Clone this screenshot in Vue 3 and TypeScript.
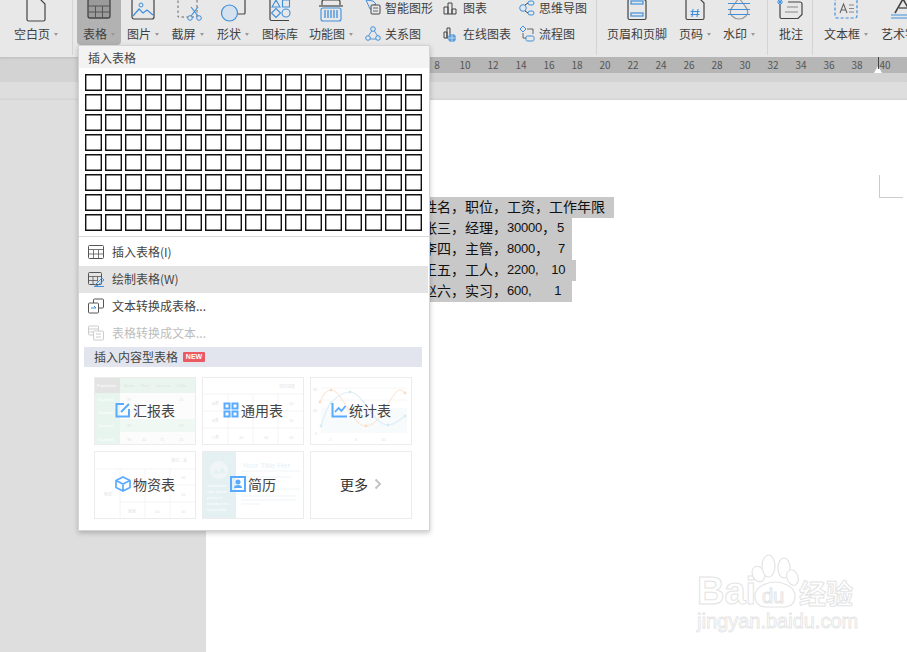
<script setup lang="ts">
const rows = Array.from({ length: 8 * 17 }, (_, i) => i)
const ruler = Array.from({ length: 17 }, (_, i) => 8 + i * 2)
const lines = [
  { text: '姓名，职位，工资，工作年限', cls: 'w1' },
  { text: '张三，经理，', num: '30000', tail: '，', end: '5', cls: 'w2' },
  { text: '李四，主管，', num: '8000', tail: '，', end: '7', cls: 'w3' },
  { text: '王五，工人，', num: '2200,', tail: '', end: '10', cls: 'w4' },
  { text: '赵六，实习，', num: '600,', tail: '', end: '1', cls: 'w5' },
]
</script>

<template>
  <div class="app">
    <header class="toolbar">
      <div class="tool t-blank">
        <svg class="ic" viewBox="0 0 30 24"><path d="M6 1h13l5 5v15.500a1.500 1.500 0 0 1-1.500 1.500h-15A1.500 1.500 0 0 1 6 21.500z" fill="none" stroke="#444" stroke-width="1.200"/></svg>
        <div class="lbl">空白页<i class="caret"></i></div>
      </div>
      <span class="sep s1"></span>
      <div class="tool t-table active">
        <svg class="ic" viewBox="0 0 30 24"><rect x="4" y="1" width="22" height="19" rx="2" fill="#9b9b9b" stroke="#444" stroke-width="1.300"/><path d="M4 8h22M4 14h22M11.500 8v12M18.500 8v12" stroke="#555" fill="none"/></svg>
        <div class="lbl">表格<i class="caret"></i></div>
      </div>
      <div class="tool t-44">
        <svg class="ic" viewBox="0 0 30 24"><rect x="4" y="1" width="22" height="20" rx="2" fill="none" stroke="#444" stroke-width="1.200"/><circle cx="13" cy="7" r="2" fill="none" stroke="#3f8fdc"/><path d="M5 18l6-7 4 4 4-3 6 5" fill="none" stroke="#3f8fdc" stroke-width="1.200"/></svg>
        <div class="lbl">图片<i class="caret"></i></div>
      </div>
      <div class="tool t-45">
        <svg class="ic" viewBox="0 0 30 24"><rect x="5" y="1" width="19" height="18" fill="none" stroke="#666" stroke-dasharray="2.500 2.500"/><path d="M18 18l7-9M25 18l-7-9" stroke="#3f8fdc" stroke-width="1.200"/><circle cx="17" cy="20" r="2.300" fill="#e8e8e8" stroke="#3f8fdc"/><circle cx="26" cy="20" r="2.300" fill="#e8e8e8" stroke="#3f8fdc"/></svg>
        <div class="lbl">截屏<i class="caret"></i></div>
      </div>
      <div class="tool t-46">
        <svg class="ic" viewBox="0 0 30 24"><path d="M15 1h11a1 1 0 0 1 1 1v13a1 1 0 0 1-1 1h-6" fill="none" stroke="#444" stroke-width="1.200"/><circle cx="11.500" cy="15" r="8" fill="#d5e1ee" stroke="#3f8fdc" stroke-width="1.200"/></svg>
        <div class="lbl">形状<i class="caret"></i></div>
      </div>
      <div class="tool t-48">
        <svg class="ic" viewBox="0 0 30 24"><path d="M5 1v20a1.500 1.500 0 0 0 1.500 1.500H24" fill="none" stroke="#444" stroke-width="1.200"/><path d="M7 9l4-7 4 7zM17.500 2h7v7h-7zM11 10.500l4.500 4.500-4.500 4.500-4.500-4.500z" fill="none" stroke="#3f8fdc" stroke-width="1.100"/><circle cx="21" cy="15" r="4" fill="none" stroke="#3f8fdc" stroke-width="1.100"/></svg>
        <div class="lbl">图标库</div>
      </div>
      <div class="tool t-54">
        <svg class="ic" viewBox="0 0 30 24"><path d="M6 7V4q0-2 2-2h14q2 0 2 2v3" fill="none" stroke="#444" stroke-width="1.200"/><path d="M3 8h24" stroke="#444" stroke-width="1.200"/><rect x="5" y="10" width="20" height="13" rx="2" fill="none" stroke="#3f8fdc" stroke-width="1.100"/><path d="M9 12v8M12 12v8M15 12v8M18 12v8M21 12v8" stroke="#3f8fdc" stroke-width="1.300"/></svg>
        <div class="lbl">功能图<i class="caret"></i></div>
      </div>
      <div class="mini m1">
        <div class="mini-row">
          <svg class="mi" viewBox="0 0 16 16"><path d="M1 0l7 1 3 3-4 2 2 3-4 0z" fill="none" stroke="#3f8fdc"/><rect x="6" y="5" width="9" height="9" rx="1" fill="#e8e8e8" stroke="#444"/><path d="M8 8h5M8 11h5" stroke="#444" stroke-width=".8"/></svg>智能图形
        </div>
        <div class="mini-row">
          <svg class="mi" viewBox="0 0 16 16"><path d="M8 3 2 12M8 3l6 9M4 13h8" fill="none" stroke="#3f8fdc" stroke-width=".9"/><circle cx="8" cy="3" r="2.300" fill="#e8e8e8" stroke="#3f8fdc"/><circle cx="3" cy="12" r="2.300" fill="#e8e8e8" stroke="#3f8fdc"/><circle cx="13" cy="12" r="2.300" fill="#e8e8e8" stroke="#3f8fdc"/></svg>关系图
        </div>
      </div>
      <div class="mini m2">
        <div class="mini-row">
          <svg class="mi" viewBox="0 0 16 16"><path d="M1 7h4v7H1zM5 3h4v11H5zM9 9h4v5H9z" fill="none" stroke="#444"/></svg>图表
        </div>
        <div class="mini-row">
          <svg class="mi" viewBox="0 0 16 16"><path d="M1 6h3v6H1zM4 2h3v10H4z" fill="none" stroke="#444"/><circle cx="9" cy="12" r="4" fill="#5a9ee0"/><path d="M5 12h8M9 8v8" stroke="#e8e8e8" stroke-width=".7"/></svg>在线图表
        </div>
      </div>
      <div class="mini m3">
        <div class="mini-row">
          <svg class="mi" viewBox="0 0 16 16"><circle cx="4" cy="8" r="3.300" fill="none" stroke="#3f8fdc"/><rect x="9" y="1" width="6" height="4" rx="2" fill="none" stroke="#3f8fdc"/><rect x="9" y="11" width="6" height="4" rx="2" fill="none" stroke="#3f8fdc"/><path d="M6 5l3-2M6 11l3 2" stroke="#444" fill="none"/></svg>思维导图
        </div>
        <div class="mini-row">
          <svg class="mi" viewBox="0 0 16 16"><path d="M4 0l3 3-3 3-3-3z" fill="none" stroke="#3f8fdc"/><rect x="7" y="10" width="8" height="5" rx="1.500" fill="none" stroke="#3f8fdc"/><path d="M8 3h6v5M4 7v5h3" fill="none" stroke="#444" stroke-width=".8"/></svg>流程图
        </div>
      </div>
      <span class="sep s2"></span>
      <div class="tool t-60">
        <svg class="ic" viewBox="0 0 30 24"><path d="M6 3a2 2 0 0 1 2-2h14l2 2v17a1.500 1.500 0 0 1-1.500 1.500h-15A1.500 1.500 0 0 1 6 20z" fill="none" stroke="#444" stroke-width="1.200"/><rect x="9" y="3" width="12" height="3" fill="none" stroke="#3f8fdc" stroke-width="1.200"/><rect x="9" y="15" width="12" height="3" fill="none" stroke="#3f8fdc" stroke-width="1.200"/></svg>
        <div class="lbl">页眉和页脚</div>
      </div>
      <div class="tool t-page">
        <svg class="ic" viewBox="0 0 30 24"><path d="M6 1h14l4 4v15a1.500 1.500 0 0 1-1.500 1.500h-15A1.500 1.500 0 0 1 6 20z" fill="none" stroke="#444" stroke-width="1.200"/><path d="M13 11l-1 8M18 11l-1 8M10.500 13.500h9M10.500 16.500h9" stroke="#3f8fdc" stroke-width="1.100"/></svg>
        <div class="lbl">页码<i class="caret"></i></div>
      </div>
      <div class="tool t-water">
        <svg class="ic" viewBox="0 0 30 24"><path d="M15 0l6 8q5 6 1 10-3 3-7 3t-7-3q-4-4 1-10z" fill="none" stroke="#999" stroke-width="1.200"/><path d="M4 5.500h22M4 11.500h22M4 16.500h22" stroke="#3f8fdc" stroke-width="1.100"/></svg>
        <div class="lbl">水印<i class="caret"></i></div>
      </div>
      <span class="sep s3"></span>
      <div class="tool t-note">
        <svg class="ic" viewBox="0 0 30 24"><path d="M4 6v13a1.500 1.500 0 0 0 1.500 1.500H22l4-4V6a2 2 0 0 0-2-2H12" fill="none" stroke="#444" stroke-width="1.200"/><path d="M4 1v6M1 4h6M2 2l4 4M6 2l-4 4" stroke="#3f8fdc"/><path d="M11 9h11M9 14h13" stroke="#888"/></svg>
        <div class="lbl">批注</div>
      </div>
      <span class="sep s4"></span>
      <div class="tool t-frame">
        <svg class="ic" viewBox="0 0 30 24"><rect x="4" y="1" width="22" height="19" rx="2" fill="none" stroke="#3f8fdc" stroke-width="1.200" stroke-dasharray="3 2"/><path d="M9 15l3.500-9 3.500 9M10.300 12h4.500" fill="none" stroke="#666" stroke-width="1.100"/><path d="M18 7h5M18 10.500h5M18 14h5" stroke="#888"/></svg>
        <div class="lbl">文本框<i class="caret"></i></div>
      </div>
      <div class="tool t-art">
        <svg class="ic" viewBox="0 0 30 24"><path d="M7 15 15 1l8 14" fill="none" stroke="#444" stroke-width="1.600"/><path d="M11 10h8" stroke="#444" stroke-width="1.300"/><path d="M3 17h24M3 20h24" stroke="#3f8fdc" stroke-width="1.100"/></svg>
        <div class="lbl">艺术字<i class="caret"></i></div>
      </div>
    </header>

    <div class="ruler-zone">
      <div class="ruler">
        <span v-for="n in ruler" :key="n" class="tick">{{ n }}</span>
        <i class="marker"></i>
      </div>
    </div>
    <div class="gutter"></div>

    <main class="workspace">
      <section class="page">
        <div v-for="l in lines" :key="l.text" class="doc-line" :class="l.cls">
          <span>{{ l.text }}</span><span v-if="l.num" class="num">{{ l.num }}</span><span>{{ l.tail }}</span><span v-if="l.end" class="num end">{{ l.end }}</span>
        </div>
        <i class="crop"></i>
        <div class="watermark">
          <div class="wm-top">
            <span class="wm-bai">Bai</span>
            <span class="wm-paw">
              <svg viewBox="0 0 48 54" width="48" height="54"><g fill="#fff" stroke="#e4e4e4" stroke-width="1.200"><ellipse cx="7.500" cy="20" rx="6" ry="8" transform="rotate(-25 7.500 20)"/><ellipse cx="17.500" cy="12" rx="6.500" ry="11"/><ellipse cx="33" cy="14" rx="6" ry="10"/><ellipse cx="41.500" cy="23.500" rx="5.500" ry="8" transform="rotate(-20 41.500 23.500)"/><path d="M4 42q0-7 8-11 6-3 12-3t12 3q8 4 8 11 0 11-12 11H16Q4 53 4 42z"/></g></svg>
              <b class="wm-du">du</b>
            </span>
            <span class="wm-cn">经验</span>
          </div>
          <div class="wm-url">jingyan.baidu.com</div>
        </div>
      </section>
    </main>

    <aside class="menu">
      <div class="menu-head">插入表格</div>
      <div class="grid"><i v-for="c in rows" :key="c" class="cell"></i></div>
      <div class="menu-list">
        <div class="item">
          <svg class="mi-ic" viewBox="0 0 18 16"><rect x="1.500" y="1.500" width="15" height="13" rx="1" fill="none" stroke="#555"/><path d="M1.500 5.500h15M1.500 10h15M6.500 5.500v9M11.500 5.500v9" stroke="#555" stroke-width=".8"/></svg>插入表格(I)
        </div>
        <div class="item hover">
          <svg class="mi-ic" viewBox="0 0 18 16"><rect x="1.500" y="1.500" width="13" height="12" rx="1" fill="none" stroke="#555"/><path d="M1.500 5.500h13M1.500 9.500h9M6 5.500v8M10.500 5.500v5" stroke="#555" stroke-width=".8"/><path d="M8 14l7-7 2 2-7 6zM7 15.500h10" fill="none" stroke="#3f8fdc"/></svg>绘制表格(W)
        </div>
        <div class="item">
          <svg class="mi-ic" viewBox="0 0 18 16"><rect x="6.500" y="1" width="10" height="9" rx="1" fill="#fff" stroke="#555"/><rect x="1.500" y="5" width="10" height="10" rx="1" fill="#fff" stroke="#555"/><path d="M4 10h5l-2-2" fill="none" stroke="#3f8fdc"/></svg>文本转换成表格...
        </div>
        <div class="item disabled">
          <svg class="mi-ic" viewBox="0 0 18 16"><rect x="1.500" y="1" width="10" height="9" rx="1" fill="none" stroke="#ccc"/><path d="M1.500 4h10M1.500 7h10" stroke="#ccc"/><rect x="6.500" y="6" width="10" height="9" rx="1" fill="#fff" stroke="#ccc"/><path d="M9 9h5M9 12h5" stroke="#ccc"/></svg>表格转换成文本...
        </div>
      </div>
      <div class="section">插入内容型表格<span class="new">NEW</span></div>
      <div class="cards">
        <div class="card">
          <svg class="thumb" viewBox="0 0 100 66">
            <rect width="100" height="66" fill="#fcfcfc"/><rect x="0" y="0" width="25" height="66" fill="#e8f5ef"/><rect x="25" width="75" height="15" fill="#eaf5f0"/><rect width="25" height="15" fill="#e4e4e4"/><rect x="25" y="41" width="75" height="13" fill="#f0f8f4"/>
            <g class="tt" fill="#fff"><text x="2" y="9">Population</text><text x="3" y="23">Sample1</text><text x="3" y="36">Sample2</text><text x="3" y="49">Sample3</text><text x="3" y="63">Sample4</text></g>
            <g class="tt" fill="#dfe6e3"><text x="29" y="9">Alpha</text><text x="46" y="9">Beta</text><text x="61" y="9">Gamma</text><text x="82" y="9">Delta</text><text x="32" y="23">35</text><text x="84" y="23">25</text><text x="32" y="49">35</text><text x="84" y="49">25</text><text x="32" y="63">35</text><text x="47" y="63">42</text><text x="65" y="63">71</text><text x="84" y="63">25</text></g>
          </svg>
          <div class="cap"><svg class="cap-ic" viewBox="0 0 16 16"><path d="M9 2H1.500v12.500H14V7" fill="none" stroke="#5aabff" stroke-width="2"/><path d="M6 10l8-8" stroke="#5aabff" stroke-width="2"/></svg>汇报表</div>
        </div>
        <div class="card">
          <svg class="thumb" viewBox="0 0 100 66">
            <path d="M0 16h100M0 33h100M0 50h100M25 16v50M50 16v50M75 16v50" stroke="#f4f4f4" fill="none"/>
            <g class="tt" fill="#e2e2e2"><text x="76" y="10">项目进度</text><text x="9" y="27">A类</text><text x="9" y="44">B类</text><text x="9" y="61">C类</text><text x="86" y="27">10</text><text x="86" y="44">10</text><text x="36" y="61">10</text><text x="61" y="61">10</text><text x="86" y="61">10</text></g>
          </svg>
          <div class="cap"><svg class="cap-ic" viewBox="0 0 16 16"><path d="M1.500 1.500h5v5h-5zM9.500 1.500h5v5h-5zM1.500 9.500h5v5h-5zM9.500 9.500h5v5h-5z" fill="none" stroke="#5aabff" stroke-width="2"/></svg>通用表</div>
        </div>
        <div class="card">
          <svg class="thumb" viewBox="0 0 100 66">
            <path d="M10 10h86M10 22h86M10 34h86M10 46h86" stroke="#f6f6f6"/><rect x="10" y="30" width="86" height="25" fill="#f8fbfc"/>
            <path d="M9 24C12 16 15 12 20 12C32 12 40 48 55 48C70 48 80 14 88 12Q92 12 94 15" fill="none" stroke="#fce8d6" stroke-width="1.200"/>
            <path d="M10 48C14 35 17 28 20 25C26 18 32 14 39 14C52 14 62 47 77 47C84 47 88 42 94 38" fill="none" stroke="#deeff5" stroke-width="1.200"/>
            <g fill="#fbdcc0"><circle cx="9" cy="24" r="1.400"/><circle cx="20" cy="12" r="1.400"/><circle cx="55" cy="48" r="1.400"/><circle cx="94" cy="15" r="1.400"/></g>
            <g fill="#d5eaf2"><circle cx="10" cy="48" r="1.400"/><circle cx="20" cy="25" r="1.400"/><circle cx="39" cy="14" r="1.400"/><circle cx="77" cy="47" r="1.400"/><circle cx="94" cy="38" r="1.400"/></g>
            <g class="tt" fill="#e2e2e2"><text x="2" y="13">80</text><text x="2" y="34">40</text><text x="4" y="57">0</text><text x="18" y="63">2</text><text x="44" y="63">6</text><text x="70" y="63">10</text></g>
          </svg>
          <div class="cap"><svg class="cap-ic" viewBox="0 0 16 16"><path d="M1.500 1v13.500H16" fill="none" stroke="#5aabff" stroke-width="2"/><path d="M4 10l3.500-4 3 3 4-5" fill="none" stroke="#5aabff" stroke-width="1.800"/></svg>统计表</div>
        </div>
        <div class="card">
          <svg class="thumb" viewBox="0 0 100 66">
            <path d="M0 17h100M25 33h75M25 50h75M25 17v49M50 17v49M75 17v49" stroke="#f4f4f4" fill="none"/>
            <g class="tt" fill="#e2e2e2"><text x="76" y="10">单位：夹</text><text x="9" y="44">物资</text><text x="33" y="61">家居</text><text x="86" y="27">10</text><text x="86" y="44">10</text><text x="60" y="61">10</text><text x="86" y="61">10</text></g>
          </svg>
          <div class="cap"><svg class="cap-ic cube" viewBox="0 0 16 16"><path d="M8 1 15 4.500v7L8 15 1 11.500v-7zM1 4.500 8 8l7-3.500M8 8v7" fill="none" stroke="#5aabff" stroke-width="1.700"/></svg>物资表</div>
        </div>
        <div class="card">
          <svg class="thumb" viewBox="0 0 100 66">
            <rect width="33" height="66" fill="#e5f0f3"/><circle cx="16" cy="18" r="9" fill="#f0f6f8"/><path d="M9 22l4-5 3 3 3-5 4 6z" fill="#e5f0f3"/>
            <g class="tt" fill="#fff"><text x="4" y="35">Vestibulum</text><text x="4" y="41">ante ipsum</text><text x="4" y="47">primis in</text><text x="4" y="53">faucibus orci</text><text x="4" y="59">luctus nulla</text></g>
            <text x="39" y="16" class="ttl" fill="#e6f1f5">Your Title Her</text>
            <path d="M38 19h59M38 37h59" stroke="#eff6f8"/>
            <path d="M38 25h50M38 29h40M38 44h55M38 48h55M38 52h20" stroke="#eef5f7" stroke-width="1.200"/>
          </svg>
          <div class="cap"><svg class="cap-ic" viewBox="0 0 16 16"><rect x="1" y="1" width="14" height="14" fill="none" stroke="#5aabff" stroke-width="2"/><circle cx="8" cy="6" r="2.500" fill="#5aabff"/><path d="M4 12q0-3 4-3t4 3z" fill="#5aabff"/></svg>简历</div>
        </div>
        <div class="card">
          <div class="cap more">更多<svg class="chev" viewBox="0 0 8 12"><path d="M1.500 1.500 6 6l-4.500 4.500" fill="none" stroke="#c4c4c4" stroke-width="2"/></svg></div>
        </div>
      </div>
    </aside>
  </div>
</template>

<style scoped>
.app {
  position: relative;
  width: 907px;
  height: 652px;
  overflow: hidden;
  display: flex;
  flex-direction: column;
  background: #dedede;
  font-family: "Noto Sans CJK SC", "Noto Sans", sans-serif;
  color: #3f3f3f;
}
.toolbar {
  height: 57px;
  flex: none;
  display: flex;
  align-items: flex-end;
  background: #e8e8e8;
  overflow: hidden;
  padding-bottom: 15px;
  box-sizing: border-box;
  font-size: 12px;
}
.tool {
  flex: none;
  display: flex;
  flex-direction: column;
  align-items: center;
}
.ic {
  width: 30px;
  height: 24px;
  display: block;
  margin-bottom: 4px;
}
.lbl {
  display: flex;
  align-items: center;
  height: 16px;
  line-height: 16px;
  white-space: nowrap;
}
.caret {
  width: 0;
  height: 0;
  margin-left: 4px;
  border-left: 2.5px solid transparent;
  border-right: 2.5px solid transparent;
  border-top: 3px solid #999;
}
.sep {
  flex: none;
  width: 1px;
  height: 55px;
  margin-bottom: -13px;
  background: #d4d4d4;
}
.t-blank { width: 72px; }
.s1 { margin-right: 4px; }
.t-table { width: 44px; }
.active {
  background: #b2b2b2;
  border-radius: 0 0 4px 4px;
  height: 45px;
  margin-top: -3px;
  margin-bottom: -3px;
  padding-bottom: 3px;
  box-sizing: content-box;
  justify-content: flex-end;
}
.t-44 { width: 44px; }
.t-45 { width: 45px; }
.t-46 { width: 46px; }
.t-48 { width: 48px; }
.t-54 { width: 54px; }
.t-60 { width: 60px; margin-left: 10px; }
.t-page { width: 50px; margin-left: 3px; }
.t-water { width: 46px; margin-left: -4px; }
.t-note { width: 36px; margin-left: 5px; }
.t-frame { width: 56px; margin-left: 5px; }
.t-art { width: 54px; margin-left: 2px; }
.s2 { margin-left: 9px; }
.s3 { margin-left: 5px; }
.s4 { margin-left: 3px; }
.mini {
  flex: none;
  display: flex;
  flex-direction: column;
  gap: 10px;
}
.m1 { width: 78px; margin-left: 7px; }
.m2 { width: 76px; }
.m3 { width: 68px; }
.mini-row {
  display: flex;
  align-items: center;
  height: 16px;
  line-height: 16px;
  white-space: nowrap;
  gap: 4px;
}
.mi { width: 16px; height: 16px; flex: none; }
.ruler-zone {
  height: 25px;
  flex: none;
  background: #d3d3d3;
  box-shadow: inset 0 3px 3px -2px #bbb;
}
.ruler {
  position: relative;
  margin-left: 206px;
  height: 16px;
  padding-left: 217px;
  display: flex;
  background: #b6b6b6;
  font-size: 10px;
  line-height: 16px;
  color: #555;
}
.tick { width: 28px; flex: none; text-align: center; }
.marker {
  position: absolute;
  left: 668px;
  top: 9px;
  width: 0;
  height: 0;
  border-left: 4px solid transparent;
  border-right: 4px solid transparent;
  border-bottom: 7px solid #fff;
}
.marker::before {
  content: "";
  position: absolute;
  left: 0;
  top: -9px;
  width: 1px;
  height: 12px;
  background: #444;
}
.gutter { height: 18px; flex: none; box-shadow: inset 0 -3px 3px -3px #c4c4c4; }
.workspace {
  flex: 1;
  display: flex;
  padding-left: 206px;
  min-height: 0;
}
.page {
  position: relative;
  flex: 1;
  background: #fff;
  padding: 97px 0 0 217px;
  box-sizing: border-box;
  font-size: 14px;
  color: #111;
}
.doc-line {
  height: 21px;
  line-height: 19px;
  background: #c8c8c8;
  white-space: pre;
  display: flex;
}
.w1 { width: 191px; }
.w2, .w3, .w5 { width: 149px; }
.w4 { width: 153px; }
.num { font-family: "Liberation Sans", sans-serif; font-size: 13px; letter-spacing: -.25px; line-height: 20px; }
.w2 .end { margin-left: 1px; }
.w3 .end { margin-left: 9px; }
.w4 .end { margin-left: 13px; }
.w5 .end { margin-left: 23px; }
.crop {
  position: absolute;
  left: 673px;
  top: 75px;
  width: 23px;
  height: 22px;
  border-left: 1px solid #ccc;
  border-bottom: 1px solid #ccc;
}
.watermark {
  position: absolute;
  left: 491px;
  top: 452px;
  width: 170px;
  color: #fff;
  -webkit-text-stroke: 1px #e4e4e4;
  font-family: "Liberation Sans", sans-serif;
}
.wm-top { display: flex; align-items: flex-end; height: 56px; }
.wm-bai { font-size: 38px; line-height: 38px; font-weight: 700; width: 54px; flex: none; margin-bottom: -2px; }
.wm-paw { position: relative; width: 48px; height: 54px; flex: none; }
.wm-paw svg { display: block; }
.wm-du {
  position: absolute;
  left: 11px;
  top: 32px;
  font-size: 20px;
  line-height: 20px;
  font-weight: 400;
}
.wm-cn {
  font-family: "Noto Sans CJK SC", sans-serif;
  font-size: 27px;
  line-height: 30px;
  font-weight: 700;
  white-space: nowrap;
}
.wm-url { font-size: 20px; line-height: 24px; white-space: nowrap; margin-top: 1px; -webkit-text-stroke: .8px #e4e4e4; }
.menu {
  position: absolute;
  left: 78px;
  top: 45px;
  width: 352px;
  height: 486px;
  box-sizing: border-box;
  background: #fff;
  border: 1px solid #d4d4d4;
  box-shadow: 0 2px 5px rgba(0, 0, 0, .22);
  font-size: 12px;
  color: #444;
}
.menu-head {
  height: 22px;
  line-height: 24px;
  padding-left: 9px;
  background: #f3f3f3;
}
.grid {
  display: grid;
  grid-template-columns: repeat(17, 17px);
  grid-auto-rows: 17px;
  gap: 3px;
  padding: 6px 0 0 6px;
}
.cell {
  background: #fff;
  box-shadow: inset 0 0 0 1.400px #111;
}
.menu-list {
  margin-top: 5px;
  padding-top: 2px;
  border-top: 1px solid #d9d9d9;
}
.item {
  height: 27px;
  box-sizing: border-box;
  padding: 0 0 2px 8px;
  display: flex;
  align-items: center;
  gap: 7px;
  margin-right: 1px;
}
.mi-ic { width: 18px; height: 16px; flex: none; }
.hover { background: #e4e4e4; }
.disabled { color: #bdbdbd; }
.section {
  margin: 0 7px 0 5px;
  height: 20px;
  line-height: 20px;
  padding-left: 10px;
  background: #e2e5ed;
  display: flex;
  align-items: center;
}
.new {
  margin-left: 5px;
  width: 22px;
  height: 10px;
  border-radius: 1px;
  text-align: center;
  background: #ea5a60;
  color: #fff;
  font: 700 7px/10px "Liberation Sans", sans-serif;
}
.cards {
  display: grid;
  grid-template-columns: repeat(3, 102px);
  grid-auto-rows: 68px;
  gap: 6px;
  padding: 10px 0 0 15px;
}
.card {
  display: grid;
  border: 1px solid #ececec;
  box-sizing: border-box;
  overflow: hidden;
}
.thumb, .cap { grid-area: 1 / 1; }
.thumb { width: 100px; height: 66px; display: block; }
.tt { font-size: 4px; font-family: "Liberation Sans", "Noto Sans CJK SC", sans-serif; }
.ttl { font-size: 8px; font-family: "Liberation Sans", sans-serif; }
.cap {
  display: flex;
  align-items: center;
  justify-content: center;
  gap: 2px;
  padding-bottom: 2px;
  font-size: 14px;
  color: #444;
}
.cap-ic { width: 16px; height: 16px; flex: none; }
.more { color: #333; gap: 6px; }
.chev { width: 8px; height: 12px; flex: none; }
</style>

<style>
html, body { margin: 0; padding: 0; }
</style>
